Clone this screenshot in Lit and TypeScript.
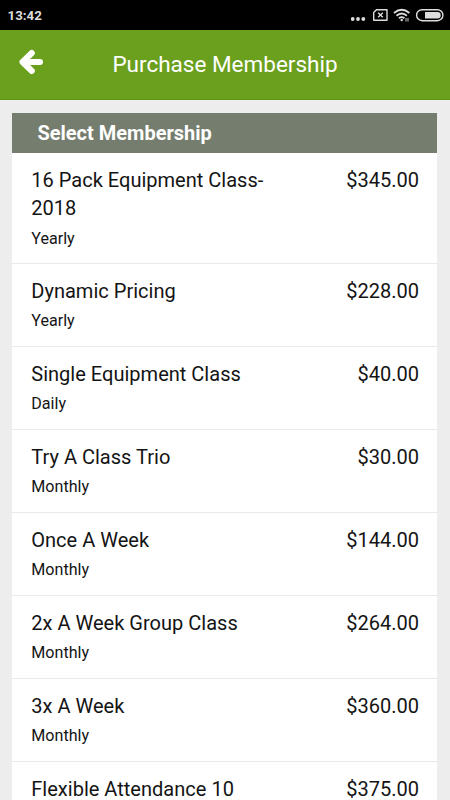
import { LitElement, html, css, nothing } from "lit";
import { customElement } from "lit/decorators.js";

const items = [
  ["16 Pack Equipment Class-\n2018", "Yearly", "$345.00"],
  ["Dynamic Pricing", "Yearly", "$228.00"],
  ["Single Equipment Class", "Daily", "$40.00"],
  ["Try A Class Trio", "Monthly", "$30.00"],
  ["Once A Week", "Monthly", "$144.00"],
  ["2x A Week Group Class", "Monthly", "$264.00"],
  ["3x A Week", "Monthly", "$360.00"],
  ["Flexible Attendance 10", "", "$375.00"],
];

@customElement("app-root")
export class AppRoot extends LitElement {
  static styles = css`
    :host { display: block; height: 800px; overflow: hidden; background: #ededed; font-family: Roboto, sans-serif; color: #141414; }
    .status { height: 30px; background: #000; color: #dedede; display: flex; align-items: center; justify-content: space-between; box-sizing: border-box; padding-left: 7.5px; }
    .time { font-size: 13.3px; font-weight: 700; line-height: 31px; }
    .icons { display: block; width: 110px; height: 30px; }
    .bar { height: 70px; box-sizing: border-box; background: #6ba01f; border-bottom: 1px solid #5c9610; display: grid; grid-template-columns: 60px 1fr 60px; }
    .arrow { display: block; width: 60px; height: 69px; }
    .title { font-size: 22.5px; line-height: 69px; color: #fff; text-align: center; white-space: nowrap; }
    .card { margin: 12.5px 12.6px 0 12.4px; background: #fff; }
    .head { height: 40.5px; background: #757d6e; color: #fff; font-size: 20px; font-weight: 700; line-height: 41px; padding-left: 25px; }
    .row { display: flex; justify-content: space-between; box-sizing: border-box; min-height: 83px; padding: 13px 18.4px 14.4px 18.9px; border-bottom: 1px solid #e9e9e9; }
    .name, .price { font-size: 20.05px; line-height: 28.4px; white-space: pre; }
    .term { font-size: 16.1px; line-height: 20px; padding-top: 5.9px; }
  `;

  render() {
    return html`
      <div class="status">
        <span class="time">13:42</span>
        <svg class="icons" viewBox="340 0 110 30" fill="none" stroke="#ddd" stroke-width="1.4">
          <g fill="#ddd" stroke="none"><circle cx="352.700" cy="19" r="1.900"/><circle cx="358" cy="19" r="1.900"/><circle cx="363.300" cy="19" r="1.900"/></g>
          <path d="M376.500 9.700H387V20.300H373.700V12.500Z" stroke-linejoin="round"/><path d="M378.200 12.700l4.600 4.600M382.800 12.700l-4.600 4.600"/>
          <path d="M394 13q7.700-6.500 15.400 0M396.500 15.700q5.200-4.500 10.400 0M399 18.200q2.700-2.200 5.400 0" stroke-width="1.800"/>
          <circle cx="401.700" cy="20" r="1.200" fill="#ddd" stroke="none"/><path d="M406 18v3.500M408 18v3.500" stroke="#aaa" stroke-width="1.200"/>
          <rect x="416.600" y="9.700" width="26.300" height="11" rx="5.500"/><path d="M425 12h12.500a3.200 3.200 0 0 1 0 6.400H425z" fill="#ddd" stroke="none"/>
        </svg>
      </div>
      <div class="bar">
        <svg class="arrow" viewBox="0 30 60 69" fill="none" stroke="#fff" stroke-width="6" stroke-linecap="round" stroke-linejoin="round"><path d="M31.800 53L22.500 62l9.300 9M23 62h17"/></svg>
        <div class="title">Purchase Membership</div>
      </div>
      <div class="card">
        <div class="head">Select Membership</div>
        ${items.map(([name, term, price]) => html`<div class="row">
          <div><div class="name">${name}</div>${term ? html`<div class="term">${term}</div>` : nothing}</div>
          <div class="price">${price}</div>
        </div>`)}
      </div>`;
  }
}
